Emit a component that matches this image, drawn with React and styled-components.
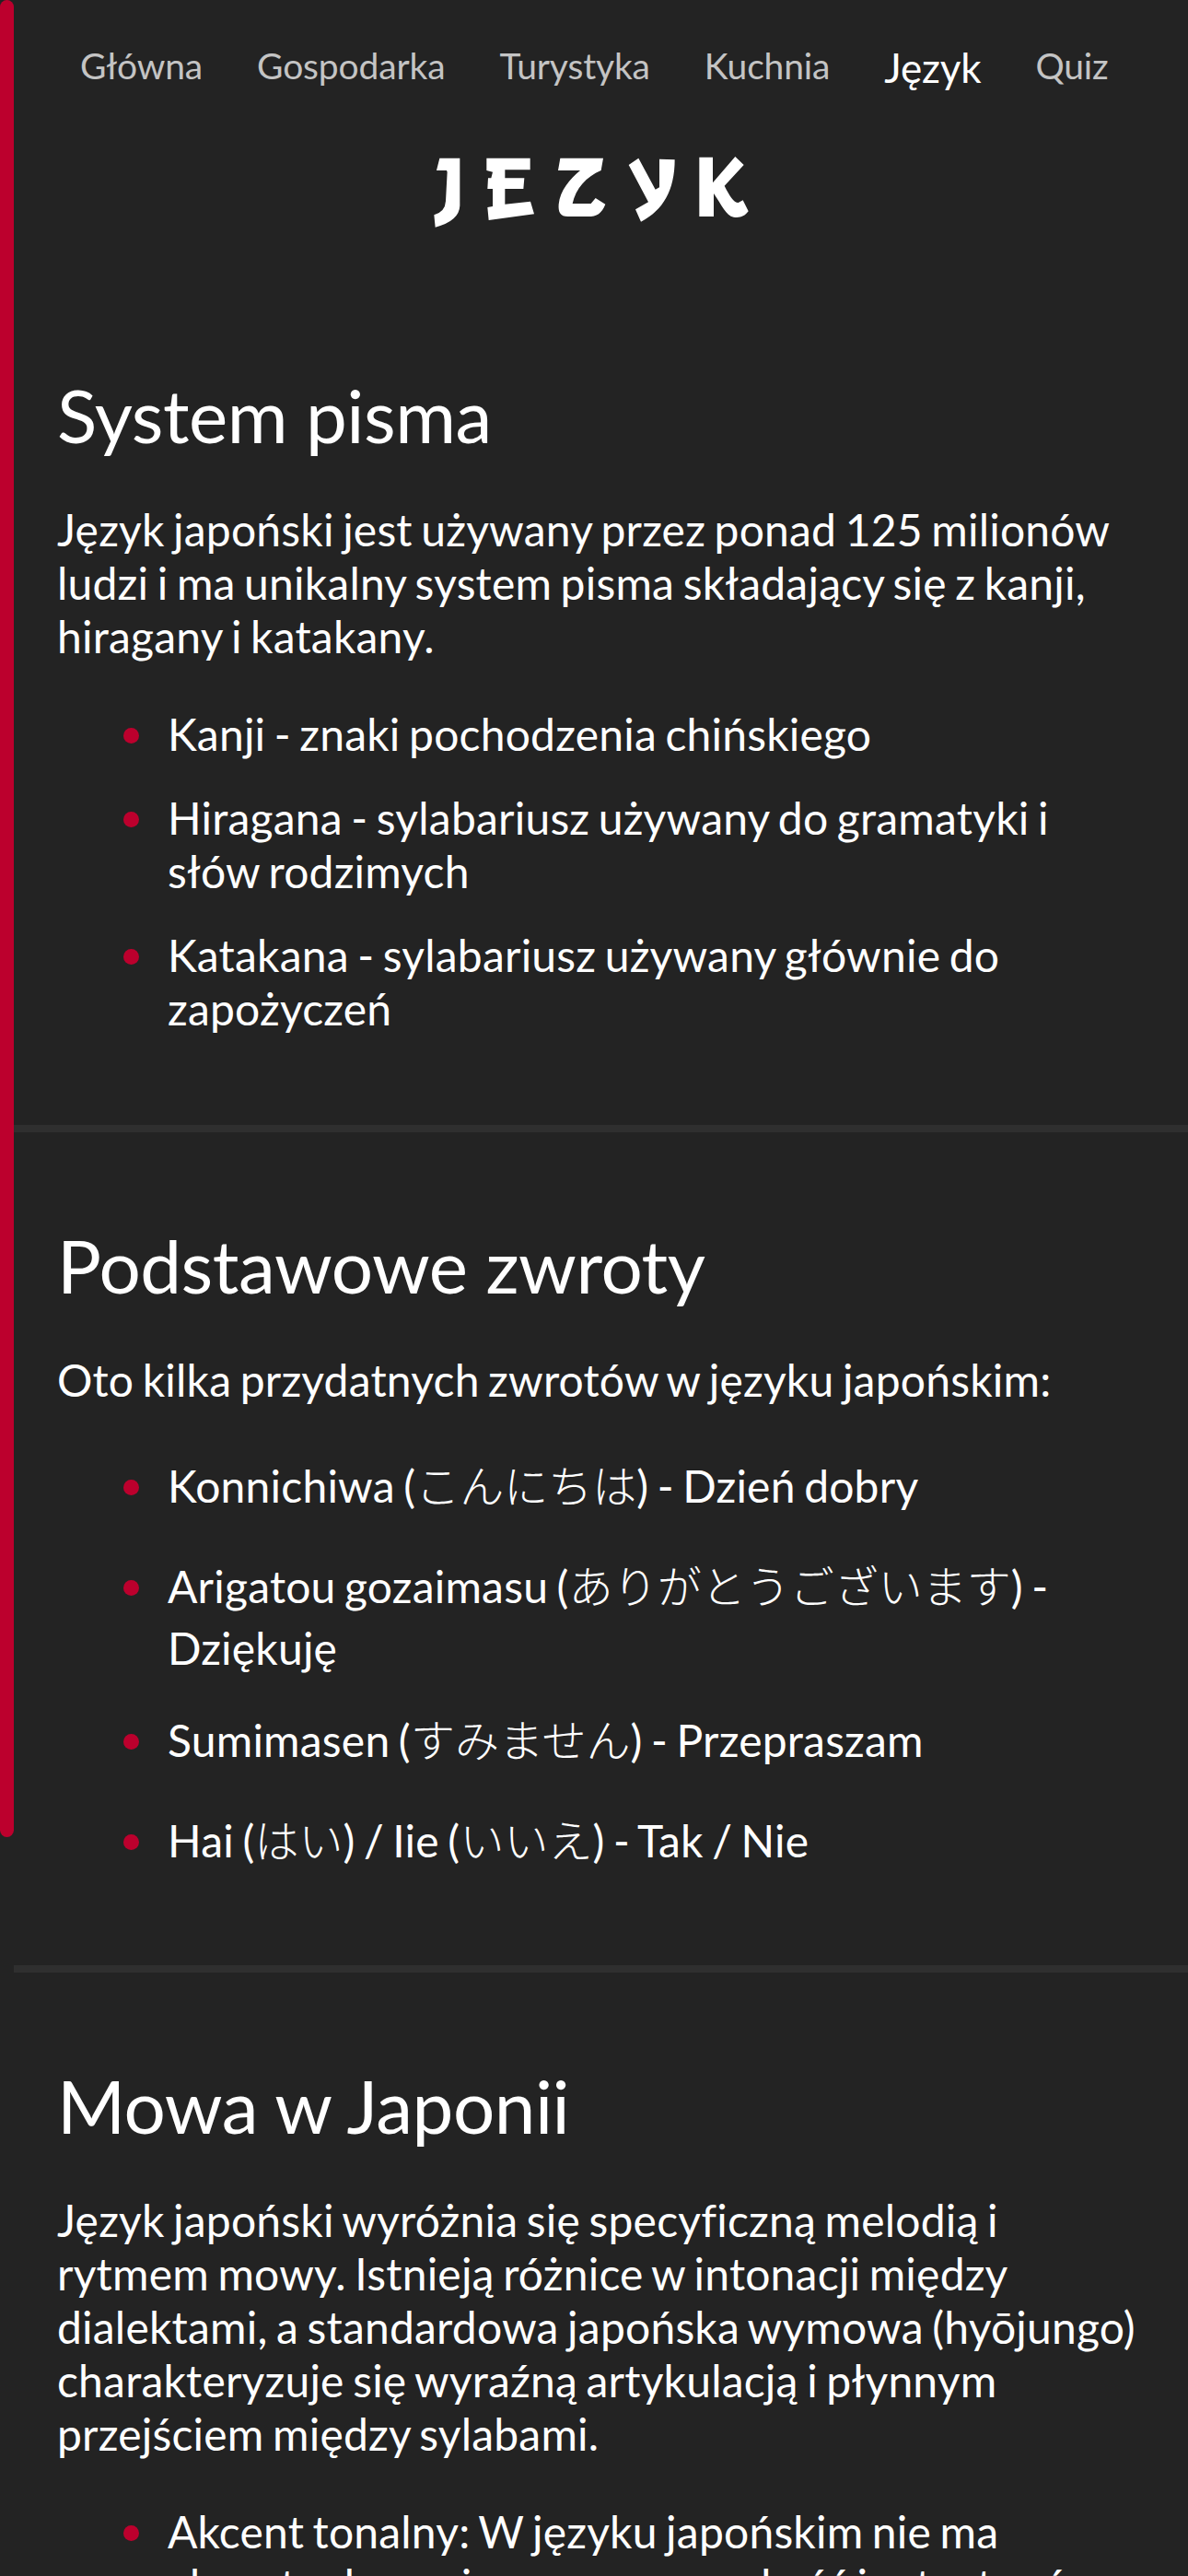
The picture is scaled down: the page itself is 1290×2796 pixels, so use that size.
import React from 'react';
import styled, {createGlobalStyle} from 'styled-components';

const GlobalStyle = createGlobalStyle`
  html, body {
    margin: 0;
    padding: 0;
    background: #232323;
  }
  body {
    font-family: Lato, "Noto Sans CJK JP", sans-serif;
    color: #ffffff;
  }
`

const Page = styled.div`
  position: relative;
  width: 1290px;
  height: 2796px;
  overflow: hidden;
`
const ScrollBar = styled.div`
  position: absolute;
  left: 0;
  top: 0;
  width: 15px;
  height: 1994px;
  border-radius: 8px;
  background: #bc002d;
`
const Nav = styled.nav`
  display: flex;
  gap: 59px;
  padding: 48px 0 0 87px;
  height: 50px;
`
const NavLink = styled.a`
  font-size: ${props => props.$active ? '44px' : '39px'};
  line-height: 47px;
  letter-spacing: -0.15px;
  color: ${props => props.$active ? '#ffffff' : '#c4c4c4'};
  margin-top: ${props => props.$active ? '2px' : '0'};
`
const Logo = styled.svg`
  display: block;
  width: 420px;
  height: 130px;
  margin: 42px 0 0 420px;
`
const Section = styled.section`
  margin-left: 15px;
  padding: ${props => props.$first ? '132px' : '96px'} 47px ${props => props.$last ? '0' : '64px'};
  border-bottom: ${props => props.$last ? 'none' : '8px solid #2f2f2f'};
`
const Title = styled.h2`
  margin: 0 0 48px;
  font-size: 80px;
  line-height: 96px;
  font-weight: 400;
  letter-spacing: -0.5px;
`
const Text = styled.p`
  margin: 0 0 48px;
  font-size: 48px;
  line-height: 58px;
  letter-spacing: 0.2px;
  word-spacing: -3px;
`
const List = styled.ul`
  list-style: none;
  margin: 0;
  padding: 0 0 0 120px;
`
const Item = styled.li`
  font-size: 48px;
  line-height: 58px;
  letter-spacing: 0.2px;
  word-spacing: -3px;
  margin-bottom: 33px;
  &::before {
    content: '';
    display: inline-block;
    width: 17px;
    height: 17px;
    margin-left: -48px;
    margin-right: 31px;
    vertical-align: 8px;
    border-radius: 50%;
    background: #bc002d;
  }
`
// kana lines sit in a taller box than plain lines
const Kana = styled.span`
  font-weight: 300;
  letter-spacing: 0;
  &::after {
    content: '';
    display: inline-block;
    width: 0;
    height: 76px;
    vertical-align: -20px;
  }
`

function LogoMark() {
  return (
    <Logo viewBox="0 0 1260 390">
      <g fill="#ffffff">
        <path d="M172 95H238V250Q236 300 158 320L154 280Q190 270 192 235L197 140L195 135H162Z"/>
        <path d="M325 95H467V133H385V160H448L445 195H385V245L468 236L480 277L332 297L328 255L345 252V195H328L330 160H340L345 140L325 135Z"/>
        <path d="M565 95H705L698 135C650 155 615 195 605 243H665L680 225L712 245C700 275 685 285 655 285H590C565 285 558 270 560 245C565 200 595 165 630 135H558Z"/>
        <path d="M788 117L820 95L875 197L888 190V98L938 100C938 200 900 265 828 302L810 262L852 238Z"/>
        <path d="M1018 92H1062V175L1135 90L1163 117L1100 185C1115 215 1130 240 1145 240L1160 232L1178 268C1165 285 1150 290 1130 287C1105 283 1090 245 1065 210V285H1018Z"/>
      </g>
    </Logo>
  )
}

export default function App() {
  return (
    <Page>
      <GlobalStyle/>
      <ScrollBar/>
      <Nav>
        <NavLink>Główna</NavLink>
        <NavLink>Gospodarka</NavLink>
        <NavLink>Turystyka</NavLink>
        <NavLink>Kuchnia</NavLink>
        <NavLink $active>Język</NavLink>
        <NavLink>Quiz</NavLink>
      </Nav>
      <LogoMark/>
      <Section $first>
        <Title>System pisma</Title>
        <Text>Język japoński jest używany przez ponad 125 milionów ludzi i ma unikalny system pisma składający się z kanji, hiragany i katakany.</Text>
        <List>
          <Item>Kanji - znaki pochodzenia chińskiego</Item>
          <Item>Hiragana - sylabariusz używany do gramatyki i słów rodzimych</Item>
          <Item>Katakana - sylabariusz używany głównie do zapożyczeń</Item>
        </List>
      </Section>
      <Section>
        <Title>Podstawowe zwroty</Title>
        <Text>Oto kilka przydatnych zwrotów w języku japońskim:</Text>
        <List>
          <Item>Konnichiwa (<Kana>こんにちは</Kana>) - Dzień dobry</Item>
          <Item>Arigatou gozaimasu (<Kana>ありがとうございます</Kana>) - Dziękuję</Item>
          <Item>Sumimasen (<Kana>すみません</Kana>) - Przepraszam</Item>
          <Item>Hai (<Kana>はい</Kana>) / Iie (<Kana>いいえ</Kana>) - Tak / Nie</Item>
        </List>
      </Section>
      <Section $last>
        <Title>Mowa w Japonii</Title>
        <Text>Język japoński wyróżnia się specyficzną melodią i rytmem mowy. Istnieją różnice w intonacji między dialektami, a standardowa japońska wymowa (hyōjungo) charakteryzuje się wyraźną artykulacją i płynnym przejściem między sylabami.</Text>
        <List>
          <Item>Akcent tonalny: W języku japońskim nie ma akcentu dynamicznego, a wysokość i rytm tonów</Item>
        </List>
      </Section>
    </Page>
  )
}
